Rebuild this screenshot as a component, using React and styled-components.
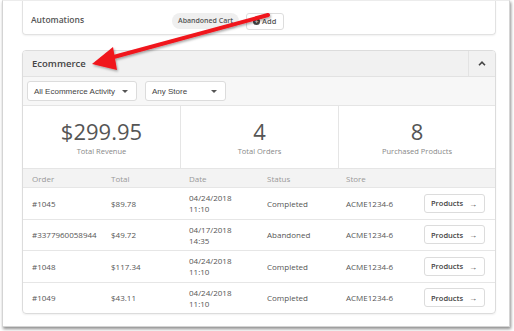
import React from "react";
import styled, { createGlobalStyle } from "styled-components";

const GlobalStyle = createGlobalStyle`
    html, body {
        margin: 0;
        padding: 0;
        background: #ffffff;
    }
    body {
        font-family: "Open Sans", "Liberation Sans", sans-serif;
        color: #555;
    }
`;

const orders = [
    { id: "#1045", total: "$89.78", date: "04/24/2018", time: "11:10", status: "Completed" },
    { id: "#3377960058944", total: "$49.72", date: "04/17/2018", time: "14:35", status: "Abandoned" },
    { id: "#1048", total: "$117.34", date: "04/24/2018", time: "11:10", status: "Completed" },
    { id: "#1049", total: "$43.11", date: "04/24/2018", time: "11:10", status: "Completed" },
];

const stats = [
    { value: "$299.95", label: "Total Revenue" },
    { value: "4", label: "Total Orders" },
    { value: "8", label: "Purchased Products" },
];

function Caret() {
    return (
        <svg width="6" height="3" viewBox="0 0 6 3">
            <path d="M0 0 L6 0 L3 3 Z" fill="#555" />
        </svg>
    );
}

function Arrow() {
    return (
        <Overlay width="514" height="331" viewBox="0 0 514 331">
            <defs>
                <filter id="sh" x="-10%" y="-10%" width="130%" height="130%">
                    <feDropShadow dx="1" dy="1.5" stdDeviation="1" floodColor="#000" floodOpacity="0.35" />
                </filter>
            </defs>
            <g filter="url(#sh)">
                <line x1="268" y1="15" x2="110" y2="58" stroke="#f0141c" strokeWidth="4" strokeLinecap="round" />
                <path d="M92 64 L113 47 L117 70 Z" fill="#f0141c" />
            </g>
        </Overlay>
    );
}

export default function App() {
    return (
        <Page>
            <GlobalStyle />
            <Frame>
                <AutomationCard>
                    <AutoLabel>Automations</AutoLabel>
                    <Tags>
                        <Pill>Abandoned Cart</Pill>
                        <AddButton>
                            <PlusDot>+</PlusDot>
                            Add
                        </AddButton>
                    </Tags>
                </AutomationCard>

                <Card>
                    <CardHeader>
                        <Title>Ecommerce</Title>
                        <Collapse>
                            <svg width="8" height="5" viewBox="0 0 8 5">
                                <path d="M1 4.2 L4 1.2 L7 4.2" fill="none" stroke="#444" strokeWidth="1.6" />
                            </svg>
                        </Collapse>
                    </CardHeader>

                    <Filters>
                        <Select $width={110}>
                            All Ecommerce Activity
                            <Caret />
                        </Select>
                        <Select $width={81}>
                            Any Store
                            <Caret />
                        </Select>
                    </Filters>

                    <Stats>
                        {stats.map((s) => (
                            <Stat key={s.label}>
                                <StatValue>{s.value}</StatValue>
                                <StatLabel>{s.label}</StatLabel>
                            </Stat>
                        ))}
                    </Stats>

                    <HeadRow>
                        <span>Order</span>
                        <span>Total</span>
                        <span>Date</span>
                        <span>Status</span>
                        <span>Store</span>
                        <span />
                    </HeadRow>
                    {orders.map((o) => (
                        <Row key={o.id}>
                            <span>{o.id}</span>
                            <span>{o.total}</span>
                            <DateCell>
                                {o.date}
                                <br />
                                {o.time}
                            </DateCell>
                            <span>{o.status}</span>
                            <span>ACME1234-6</span>
                            <ProductsButton>
                                Products <span>→</span>
                            </ProductsButton>
                        </Row>
                    ))}
                </Card>
            </Frame>
            <Arrow />
        </Page>
    );
}

const Page = styled.div`
    position: relative;
    width: 514px;
    height: 331px;
    overflow: hidden;
`;

const Overlay = styled.svg`
    position: absolute;
    top: 0;
    left: 0;
    pointer-events: none;
`;

const Frame = styled.div`
    margin-left: 2px;
    width: 508px;
    height: 327px;
    border: 1px solid #d4d4d4;
    border-top-color: #ececec;
    box-shadow: 1px 2px 3px rgba(0, 0, 0, 0.45);
    padding: 0 13px 0 19px;
    box-sizing: border-box;
    background: #fff;
`;

const AutomationCard = styled.div`
    display: grid;
    grid-template-columns: 141px 1fr;
    align-items: center;
    height: 34px;
    border: 1px solid #e2e2e2;
    border-top: none;
    border-radius: 0 0 4px 4px;
    box-shadow: 0 1px 2px rgba(0, 0, 0, 0.06);
    padding: 7px 0 0 8px;
    box-sizing: border-box;
    margin-bottom: 15px;
`;

const AutoLabel = styled.div`
    font-size: 8.5px;
    font-weight: 600;
    color: #555;
    margin-top: -3px;
`;

const Tags = styled.div`
    display: flex;
    align-items: center;
    gap: 7px;
`;

const Pill = styled.div`
    height: 16px;
    line-height: 16px;
    padding: 0 6px;
    border-radius: 8px;
    background: #efefef;
    font-size: 7px;
    font-weight: 600;
    color: #555;
`;

const AddButton = styled.div`
    display: flex;
    align-items: center;
    gap: 2px;
    height: 17px;
    padding: 0 7px 0 6px;
    border: 1px solid #ddd;
    border-radius: 3px;
    box-sizing: border-box;
    font-size: 7.5px;
    font-weight: 600;
    color: #555;
`;

const PlusDot = styled.span`
    display: inline-flex;
    align-items: center;
    justify-content: center;
    width: 7px;
    height: 7px;
    border-radius: 50%;
    background: #444;
    color: #fff;
    font-size: 7px;
    line-height: 7px;
`;

const Card = styled.div`
    border: 1px solid #dcdcdc;
    border-radius: 4px;
    box-shadow: 0 1px 2px rgba(0, 0, 0, 0.06);
    overflow: hidden;
`;

const CardHeader = styled.div`
    display: flex;
    align-items: stretch;
    height: 25px;
    background: #f1f1f1;
    border-bottom: 1px solid #e2e2e2;
`;

const Title = styled.div`
    flex: 1;
    display: flex;
    align-items: center;
    padding-left: 9px;
    font-size: 9.5px;
    font-weight: 600;
    color: #444;
`;

const Collapse = styled.div`
    width: 26px;
    display: flex;
    align-items: center;
    justify-content: center;
    border-left: 1px solid #e3e3e3;
`;

const Filters = styled.div`
    display: flex;
    align-items: center;
    gap: 8px;
    height: 28px;
    padding: 0 4px;
    background: #f7f7f7;
    border-bottom: 1px solid #e5e5e5;
`;

const Select = styled.div`
    display: flex;
    align-items: center;
    justify-content: space-between;
    width: ${(p) => p.$width}px;
    height: 20px;
    padding: 0 8px 0 6px;
    box-sizing: border-box;
    border: 1px solid #dcdcdc;
    border-radius: 3px;
    background: #fff;
    font-family: "Liberation Sans", Arial, sans-serif;
    font-size: 8px;
    color: #444;
`;

const Stats = styled.div`
    display: grid;
    grid-template-columns: 157px 158px 1fr;
    height: 62px;
    border-bottom: 1px solid #e5e5e5;
`;

const Stat = styled.div`
    display: flex;
    flex-direction: column;
    align-items: center;
    justify-content: center;
    & + & {
        border-left: 1px solid #e5e5e5;
    }
`;

const StatValue = styled.div`
    font-size: 22px;
    line-height: 24px;
    color: #555;
`;

const StatLabel = styled.div`
    font-size: 7.5px;
    line-height: 10px;
    color: #888;
    margin-top: 3px;
`;

const TableGrid = styled.div`
    display: grid;
    grid-template-columns: 79px 78px 78px 79px 78px 1fr;
    align-items: center;
    padding-left: 9px;
    font-size: 8px;
`;

const HeadRow = styled(TableGrid)`
    height: 18px;
    background: #f3f3f3;
    color: #999;
`;

const Row = styled(TableGrid)`
    height: 30.5px;
    border-top: 1px solid #e6e6e6;
    color: #555;
`;

const DateCell = styled.span`
    line-height: 11px;
`;

const ProductsButton = styled.div`
    display: flex;
    align-items: center;
    justify-content: space-between;
    width: 61px;
    height: 19px;
    padding: 0 7px 0 6px;
    box-sizing: border-box;
    border: 1px solid #dcdcdc;
    border-radius: 3px;
    background: #fff;
    font-size: 7.5px;
    font-weight: 600;
    color: #444;
    span {
        font-size: 8px;
    }
`;
